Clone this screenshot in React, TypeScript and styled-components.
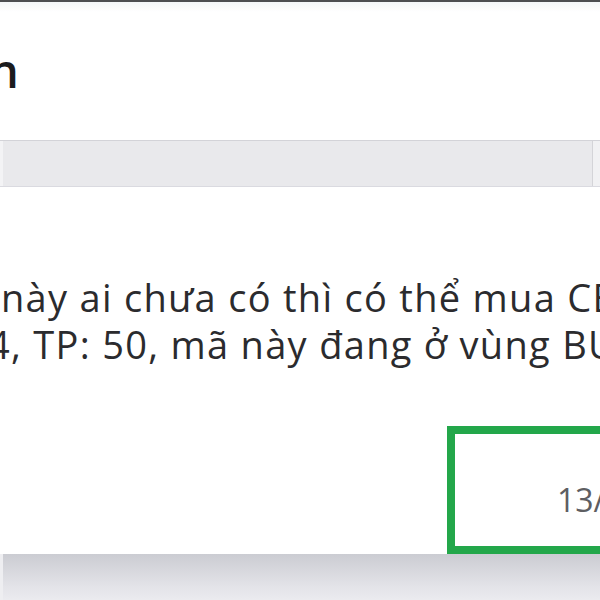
import React from 'react'
import styled, { createGlobalStyle } from 'styled-components'

const GlobalStyle = createGlobalStyle`
  html, body {
    margin: 0;
    padding: 0;
    background: #ffffff;
  }
  body {
    font-family: "Open Sans", "Noto Sans", Arial, sans-serif;
  }
`

const Page = styled.div`
  width: 600px;
  height: 600px;
  overflow: hidden;
  display: flex;
  flex-direction: column;
  border-top: 2px solid #4d4f52;
  box-sizing: border-box;
  background: #ffffff;
`

const Header = styled.div`
  height: 138px;
  box-sizing: border-box;
  padding-top: 40px;
  overflow: hidden;
  background: linear-gradient(#f3f7f9 0px, #ffffff 10px);
`

const Title = styled.h1`
  margin: 0 0 0 -11px;
  font-size: 47px;
  line-height: 56px;
  font-weight: 600;
  color: #1b1b1d;
  white-space: nowrap;
`

const Band = styled.div`
  height: 47px;
  box-sizing: border-box;
  background: #e9e9ec;
  border-top: 1px solid #d3d3d8;
  border-bottom: 1px solid #dadae0;
  box-shadow: inset 3px 0 0 #f3f3f5, inset -7px 0 0 #f1f1f3, inset -8px 0 0 #d4d4d8;
`

const Body = styled.div`
  flex: 1;
  display: flex;
  flex-direction: column;
  padding-top: 87px;
  overflow: hidden;
`

const Line = styled.div<{ $shift: number }>`
  font-size: 38px;
  line-height: 47px;
  letter-spacing: 1.3px;
  color: #2b2b2e;
  white-space: nowrap;
  margin-left: ${(p) => p.$shift}px;
`

const Footer = styled.div`
  margin-top: auto;
  display: flex;
  justify-content: flex-end;
  margin-right: -47px;
`

const CounterBox = styled.div`
  width: 200px;
  height: 128px;
  box-sizing: border-box;
  border: 8px solid #23a74a;
  padding: 46px 0 0 102px;
  font-size: 32px;
  line-height: 40px;
  color: #5e5e62;
  background: #ffffff;
  white-space: nowrap;
`

const BottomBar = styled.div`
  height: 46px;
  flex-shrink: 0;
  background: linear-gradient(#cbccd2, #e3e3e8 70%, #ebebef);
  box-shadow: inset 3px 0 0 #eeeef1;
`

export default function App() {
  return (
    <>
      <GlobalStyle />
      <Page>
        <Header>
          <Title>n</Title>
        </Header>
        <Band />
        <Body>
          <Line $shift={1}>này ai chưa có thì có thể mua CE</Line>
          <Line $shift={-12}>4, TP: 50, mã này đang ở vùng BU</Line>
          <Footer>
            <CounterBox>13/100</CounterBox>
          </Footer>
        </Body>
        <BottomBar />
      </Page>
    </>
  )
}
